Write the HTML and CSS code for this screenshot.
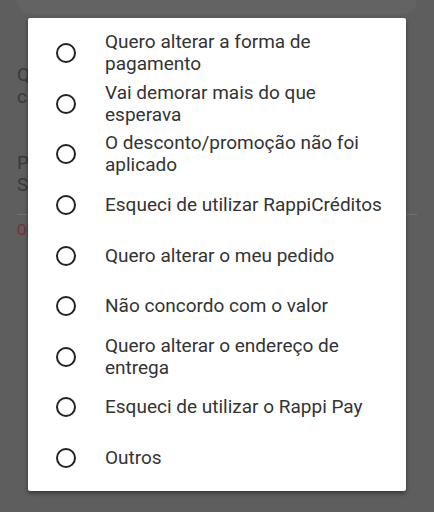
FILE: index.html
```html
<!DOCTYPE html>
<html lang="pt">
<head>
<meta charset="utf-8">
<link rel="stylesheet" href="styles.css">
</head>
<body>
<div class="screen">
  <div class="topcard"></div>
  <div class="bg-content">
    <p class="bg-line l1">Qual é o motivo do</p>
    <p class="bg-line l2">cancelamento?</p>
    <div class="bg-row">
      <div>
        <p class="bg-line l3">Pedido</p>
        <p class="bg-line l4">Selecione</p>
      </div>
      <svg class="chev" width="10" height="8" viewBox="0 0 10 8"><path d="M1 2 L5 6 L9 2" fill="none" stroke="#3a3a3a" stroke-width="1.5"/></svg>
    </div>
    <div class="bg-divider"></div>
    <p class="bg-line red">Obrigatório</p>
  </div>

  <div class="dialog">
    <label class="opt"><span class="radio"></span><span class="txt">Quero alterar a forma de pagamento</span></label>
    <label class="opt"><span class="radio"></span><span class="txt">Vai demorar mais do que esperava</span></label>
    <label class="opt"><span class="radio"></span><span class="txt">O desconto/promoção não foi aplicado</span></label>
    <label class="opt"><span class="radio"></span><span class="txt">Esqueci de utilizar RappiCréditos</span></label>
    <label class="opt"><span class="radio"></span><span class="txt">Quero alterar o meu pedido</span></label>
    <label class="opt"><span class="radio"></span><span class="txt">Não concordo com o valor</span></label>
    <label class="opt"><span class="radio"></span><span class="txt">Quero alterar o endereço de entrega</span></label>
    <label class="opt"><span class="radio"></span><span class="txt">Esqueci de utilizar o Rappi Pay</span></label>
    <label class="opt"><span class="radio"></span><span class="txt">Outros</span></label>
  </div>
</div>
</body>
</html>
```
FILE: styles.css
```css
* { box-sizing: border-box; }
html, body { margin: 0; padding: 0; }
body {
  width: 434px;
  height: 512px;
  overflow: hidden;
  background: #5e5e5e;
  font-family: Roboto, "Noto Sans", sans-serif;
}
.screen {
  position: relative;
  width: 434px;
  height: 512px;
}
.topcard {
  margin: 0 17px;
  height: 14px;
  background: #636363;
  border-radius: 0 0 14px 14px;
}
.bg-content {
  padding: 50px 17px 0 17px;
}
.bg-line {
  margin: 0;
  font-size: 19px;
  line-height: 22px;
  color: #3a3a3a;
}
.l2 { margin-bottom: 44px; }
.bg-row {
  display: flex;
  justify-content: space-between;
  align-items: center;
}
.chev { margin-right: 18px; }
.bg-divider {
  margin-top: 18px;
  height: 1px;
  background: #707070;
}
.red {
  color: #7a2d38;
  font-size: 14px;
  margin-top: 4px;
}
.dialog {
  position: absolute;
  left: 28px;
  top: 18px;
  width: 378px;
  height: 473px;
  background: #ffffff;
  border-radius: 2px;
  padding: 10px 0 8px 0;
  box-shadow: 0 2px 4px rgba(0,0,0,0.45);
  display: flex;
  flex-direction: column;
}
.opt {
  height: 50.6px;
  display: flex;
  align-items: center;
  padding-left: 28px;
  padding-right: 16px;
}
.radio {
  flex: 0 0 auto;
  width: 20px;
  height: 20px;
  border: 2px solid #222222;
  border-radius: 50%;
  margin-right: 29px;
}
.txt {
  font-size: 19px;
  font-weight: 400;
  line-height: 22px;
  color: #333333;
  max-width: 285px;
}
```
